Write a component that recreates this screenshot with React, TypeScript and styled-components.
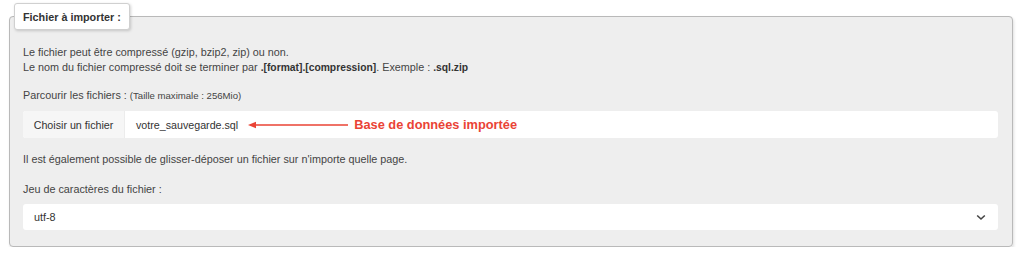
import React from "react";
import styled, { createGlobalStyle } from "styled-components";

const Global = createGlobalStyle`
  html, body { margin: 0; padding: 0; background: #fff; }
  body { font-family: "Liberation Sans", Arial, sans-serif; color: #444; }
`;

const Page = styled.div`
  padding: 3px 11px 0 9px;
  width: 1024px;
  box-sizing: border-box;
`;

const Fieldset = styled.fieldset`
  margin: 0;
  padding: 0 14px 16px 13px;
  background: #eeeeee;
  border: 1px solid #b9b9b9;
  border-radius: 4px;
  box-shadow: 1px 2px 3px rgba(0, 0, 0, 0.12);
  min-width: 0;
  width: 1004px;
  box-sizing: border-box;
`;

const Legend = styled.legend`
  margin-left: -9px;
  padding: 7px 8px 6px 8px;
  background: #fff;
  border: 1px solid #d0d0d0;
  border-radius: 3px;
  box-shadow: 1px 1px 3px rgba(0, 0, 0, 0.18);
  font-weight: bold;
  font-size: 10.8px;
  color: #333;
  line-height: 12px;
`;

const Para = styled.p<{ $mt?: number }>`
  margin: ${(p) => p.$mt ?? 0}px 0 0 0;
  font-size: 10.8px;
  line-height: 15px;
  color: #444;
  b {
    font-size: 10.3px;
    color: #333;
  }
`;

const Small = styled.span`
  font-size: 9.6px;
`;

const FileRow = styled.div`
  margin-top: 8px;
  display: flex;
  align-items: stretch;
  height: 27px;
  background: #fff;
  border-radius: 3px;
  overflow: hidden;
`;

const FileButton = styled.div`
  width: 101px;
  background: #f6f6f6;
  border-right: 1px solid #ececec;
  display: flex;
  align-items: center;
  justify-content: center;
  font-size: 10.7px;
  color: #333;
`;

const FileName = styled.div`
  display: flex;
  align-items: center;
  padding-left: 11px;
  font-size: 10.7px;
  color: #333;
`;

const ArrowWrap = styled.span`
  display: flex;
  margin: 0 6px 0 10px;
`;

const Annotation = styled.span`
  color: #ea4335;
  font-weight: bold;
  font-size: 12.8px;
`;

const Select = styled.div`
  margin-top: 7px;
  height: 26px;
  background: #fff;
  border-radius: 3px;
  display: flex;
  align-items: center;
  justify-content: space-between;
  padding: 0 12px 0 11px;
  font-size: 10.8px;
  color: #333;
`;

const Arrow = () => (
  <svg width="100" height="8" viewBox="0 0 100 8">
    <line x1="4" y1="4" x2="100" y2="4" stroke="#ea4335" strokeWidth="1.4" />
    <polygon points="0,4 8,0.8 8,7.2" fill="#ea4335" />
  </svg>
);

const Chevron = () => (
  <svg width="10" height="7" viewBox="0 0 10 7">
    <polyline points="1.2,1.5 5,5 8.8,1.5" fill="none" stroke="#444" strokeWidth="1.6" />
  </svg>
);

export default function App() {
  return (
    <>
      <Global />
      <Page>
        <Fieldset>
          <Legend>Fichier à importer :</Legend>
          <Para $mt={15}>Le fichier peut être compressé (gzip, bzip2, zip) ou non.</Para>
          <Para>
            Le nom du fichier compressé doit se terminer par <b>.[format].[compression]</b>. Exemple : <b>.sql.zip</b>
          </Para>
          <Para $mt={13}>
            Parcourir les fichiers : <Small>(Taille maximale : 256Mio)</Small>
          </Para>
          <FileRow>
            <FileButton>Choisir un fichier</FileButton>
            <FileName>
              votre_sauvegarde.sql
              <ArrowWrap>
                <Arrow />
              </ArrowWrap>
              <Annotation>Base de données importée</Annotation>
            </FileName>
          </FileRow>
          <Para $mt={14}>Il est également possible de glisser-déposer un fichier sur n'importe quelle page.</Para>
          <Para $mt={15}>Jeu de caractères du fichier :</Para>
          <Select>
            <span>utf-8</span>
            <Chevron />
          </Select>
        </Fieldset>
      </Page>
    </>
  );
}
